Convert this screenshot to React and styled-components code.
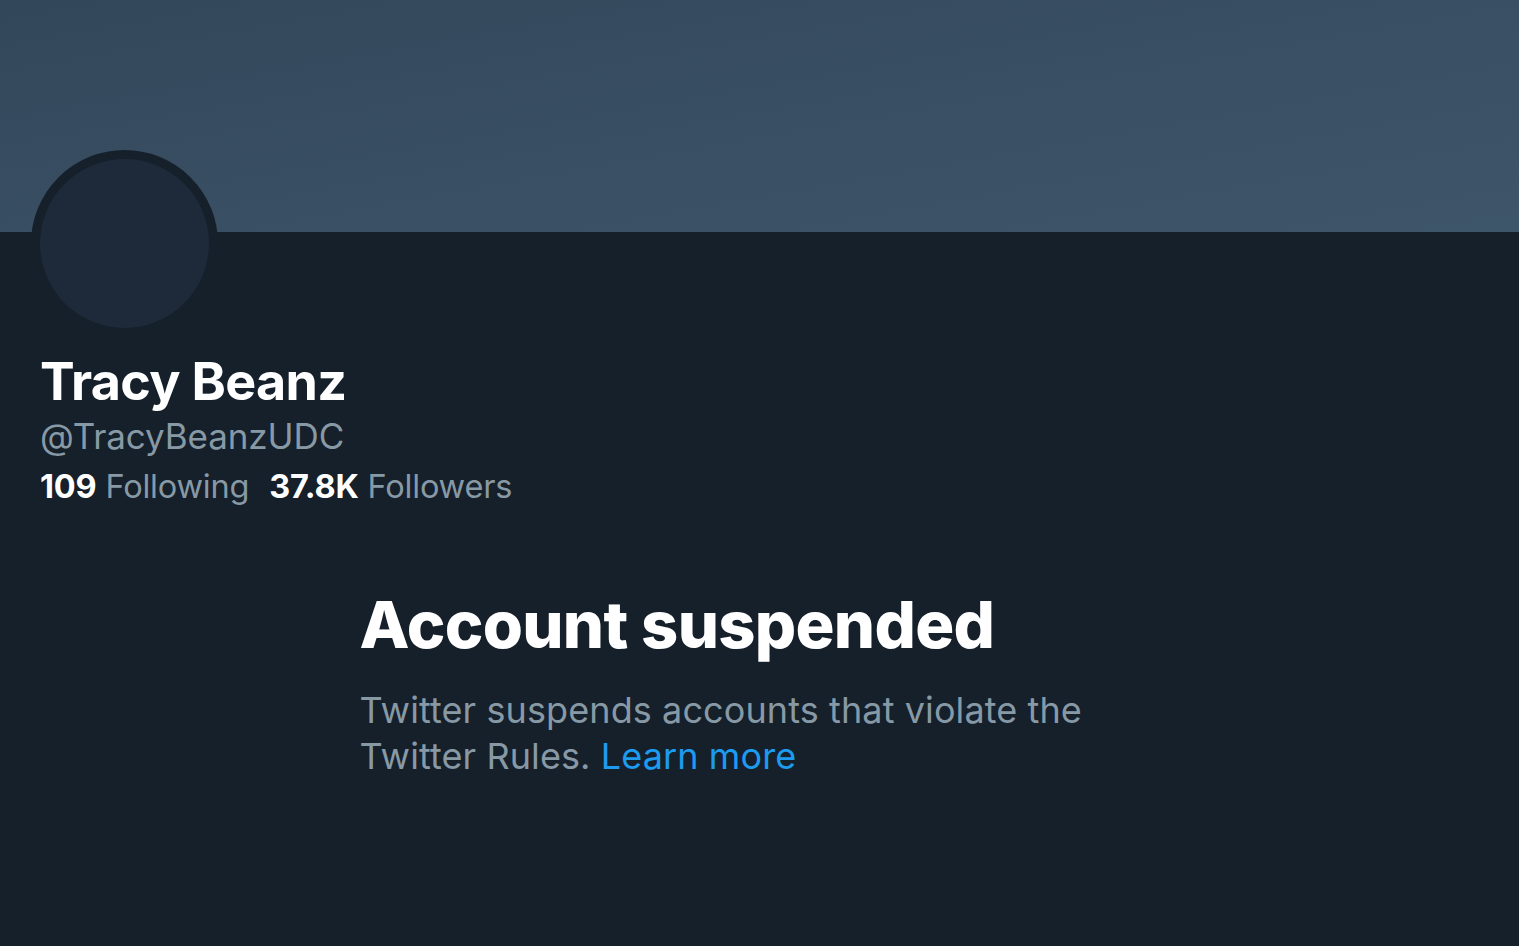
import React from 'react'
import styled, { createGlobalStyle } from 'styled-components'

const GlobalStyle = createGlobalStyle`
  html, body {
    margin: 0;
    padding: 0;
    background: #15202b;
  }
  body {
    font-family: Inter, "Liberation Sans", Arial, sans-serif;
    -webkit-font-smoothing: antialiased;
  }
`

const Page = styled.div`
  min-height: 946px;
  background: #15202b;
  overflow: hidden;
`

const Banner = styled.div`
  height: 232px;
  background: linear-gradient(170deg, #33475a 0%, #3a5064 60%, #3e5669 100%);
`

const Profile = styled.div`
  padding: 0 40px;
  display: flex;
  flex-direction: column;
  align-items: flex-start;
`

const Avatar = styled.div`
  width: 169px;
  height: 169px;
  margin-top: -82px;
  margin-left: -9px;
  border-radius: 50%;
  background: #1e2a3a;
  border: 9px solid #15202b;
`

const Name = styled.h1`
  margin: 16px 0 0;
  font-size: 52px;
  line-height: 58px;
  font-weight: 700;
  letter-spacing: -0.7px;
  color: #ffffff;
`

const Handle = styled.div`
  font-size: 35px;
  line-height: 50px;
  color: #8899a6;
  letter-spacing: -0.1px;
`

const Stats = styled.div`
  display: flex;
  gap: 20px;
  margin-top: 2px;
  font-size: 32.5px;
  line-height: 48px;
`

const Stat = styled.span`
  color: #8899a6;
  letter-spacing: -0.2px;

  b {
    color: #ffffff;
    font-weight: 700;
    margin-right: 9px;
  }
`

const Notice = styled.section`
  width: 800px;
  margin: 76px auto 0;
`

const Title = styled.h2`
  margin: 0;
  font-size: 65px;
  line-height: 76px;
  font-weight: 800;
  letter-spacing: -0.7px;
  color: #ffffff;
`

const Message = styled.p`
  margin: 24px 0 0;
  font-size: 36px;
  line-height: 46px;
  color: #8899a6;
  letter-spacing: 0.1px;
`

const LearnMore = styled.a`
  color: #1d9bf0;
  text-decoration: none;
  cursor: pointer;
`

export default function App() {
  return (
    <>
      <GlobalStyle />
      <Page>
        <Banner />
        <Profile>
          <Avatar />
          <Name>Tracy Beanz</Name>
          <Handle>@TracyBeanzUDC</Handle>
          <Stats>
            <Stat><b>109</b>Following</Stat>
            <Stat><b>37.8K</b>Followers</Stat>
          </Stats>
        </Profile>
        <Notice>
          <Title>Account suspended</Title>
          <Message>
            Twitter suspends accounts that violate the Twitter Rules.{' '}
            <LearnMore>Learn more</LearnMore>
          </Message>
        </Notice>
      </Page>
    </>
  )
}
